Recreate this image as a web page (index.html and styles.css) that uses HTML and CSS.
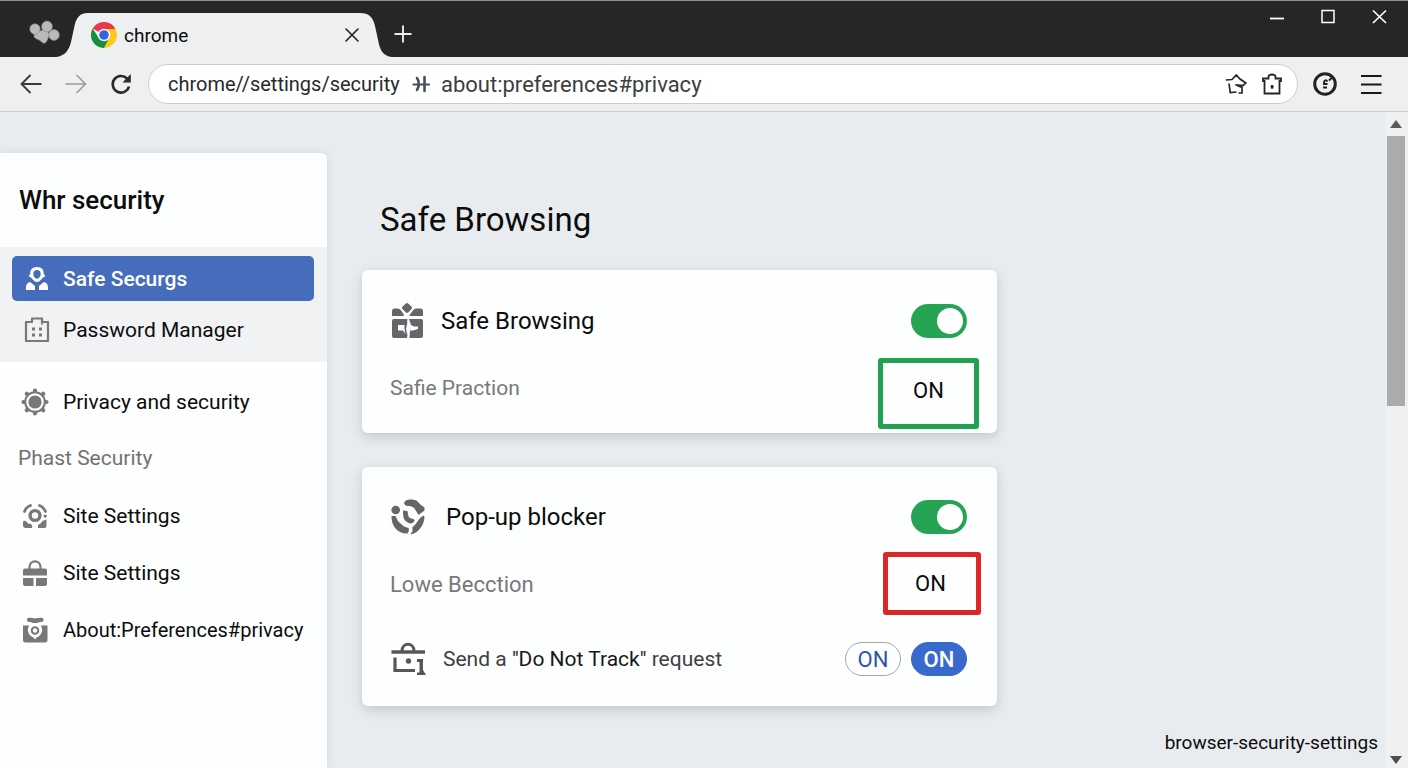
FILE: index.html
```html
<!DOCTYPE html>
<html lang="en">
<head>
<meta charset="utf-8">
<meta name="viewport" content="width=device-width, initial-scale=1">
<title>browser-security-settings</title>
<link rel="stylesheet" href="styles.css">
</head>
<body>
<header class="titlebar">
  <svg class="paw" width="32" height="26" viewBox="0 0 32 26" aria-hidden="true">
    <g fill="#b9b9b9" stroke="#8c8c8c" stroke-width=".6"><path d="M9 12c4 0 5-3 8-2s5 4 4 6-2 6-4 7-4-2-6-3-5-2-5-4 1-4 3-4z"/><circle cx="7" cy="9" r="5.2"/><circle cx="19" cy="6.500" r="5.400"/><circle cx="26" cy="15" r="5.400"/></g>
  </svg>
  <div class="tab">
    <svg class="tab-side" width="32" height="44" viewBox="0 0 32 44" aria-hidden="true"><path fill="#eeeff0" d="M0 44C9 43 13 37 15 29L18.500 13C20.500 4 24 0 32 0V44Z"/></svg>
    <div class="tab-body">
      <svg width="26" height="26" viewBox="0 0 26 26" aria-hidden="true">
        <path fill="#e8384b" d="M13 13L1.700 6.500A13 13 0 0 1 24.300 6.500Z"/>
        <path fill="#fcc91c" d="M13 13L13 7H24.500A13 13 0 0 1 13 26Z"/>
        <path fill="#178c45" d="M1.700 6.500L7.800 16 13 19 18 16 13 26A13 13 0 0 1 1.700 6.500Z"/>
        <circle cx="13" cy="13" r="6.200" fill="#fff"/><circle cx="13" cy="13" r="4.800" fill="#2f68d8"/>
      </svg>
      <span class="tab-title">chrome</span>
      <button class="icon-btn" type="button" aria-label="Close tab"><svg width="14" height="14" viewBox="0 0 14 14"><path d="M1 1L13 13M13 1L1 13" stroke="#222" stroke-width="1.600" stroke-linecap="round"/></svg></button>
    </div>
    <svg class="tab-side" width="32" height="44" viewBox="0 0 32 44" aria-hidden="true"><path fill="#eeeff0" d="M32 44C23 43 20 37 18.500 29L15 13C13 4 9 0 0 0V44Z"/></svg>
  </div>
  <button class="icon-btn new-tab" type="button" aria-label="New tab"><svg width="18" height="18" viewBox="0 0 18 18"><path d="M9 .5V17.500M.5 9H17.500" stroke="#eee" stroke-width="1.900"/></svg></button>
  <div class="window-controls">
    <button class="icon-btn" type="button" aria-label="Minimize"><svg width="16" height="16" viewBox="0 0 16 16"><path d="M1 10.500H15" stroke="#fff" stroke-width="1.800"/></svg></button>
    <button class="icon-btn" type="button" aria-label="Maximize"><svg width="16" height="16" viewBox="0 0 16 16"><rect x="2" y="2.500" width="12" height="12" fill="none" stroke="#fff" stroke-width="1.500"/></svg></button>
    <button class="icon-btn" type="button" aria-label="Close"><svg width="16" height="16" viewBox="0 0 16 16"><path d="M2 2.500L15 15M15 2.500L2 15" stroke="#fff" stroke-width="1.700"/></svg></button>
  </div>
</header>

<nav class="toolbar" aria-label="Browser toolbar">
  <button class="icon-btn" type="button" aria-label="Back"><svg width="22" height="20" viewBox="0 0 22 20"><path d="M21.500 10H1.500M10.500 1L1.500 10L10.500 19" fill="none" stroke="#3a3a3a" stroke-width="1.900"/></svg></button>
  <button class="icon-btn" type="button" aria-label="Forward"><svg width="22" height="20" viewBox="0 0 22 20"><path d="M.5 10H20.500M11.500 1L20.500 10L11.500 19" fill="none" stroke="#9b9c9d" stroke-width="1.600"/></svg></button>
  <button class="icon-btn" type="button" aria-label="Reload"><svg width="22" height="22" viewBox="0 0 22 22"><path d="M17 5.500A8.300 8.300 0 1 0 19 13.500" fill="none" stroke="#2a2a2a" stroke-width="2.600"/><path d="M20.800 1V9.500H12.500Z" fill="#2a2a2a"/></svg></button>
  <form class="omnibox">
    <input class="url-site" aria-label="Address" value="chrome//settings/security">
    <svg width="18" height="18" viewBox="0 0 18 18" aria-hidden="true"><path d="M5 3L6.500 6V11.500L5 15M12.500 2V16" fill="none" stroke="#414f5e" stroke-width="2.600" stroke-linecap="round"/><path d="M1.500 9.500H17" fill="none" stroke="#414f5e" stroke-width="2.200" stroke-linecap="round"/></svg>
    <input class="url-page" aria-label="Page address" value="about:preferences#privacy">
    <button class="icon-btn" type="button" aria-label="Share"><svg width="22" height="22" viewBox="0 0 22 22"><path d="M.8 7L7 6.500 11.300 2 15 6 20.800 10 18 12.500 10.500 11.800 17 14.500V20H13.500M4 10.500L5.300 19.500 11.500 19" fill="none" stroke="#252525" stroke-width="1.700"/></svg></button>
    <button class="icon-btn" type="button" aria-label="Security"><svg width="22" height="22" viewBox="0 0 22 22"><path d="M3.500 8H2V5.500H7.500V3.500Q8 1.500 11 1.500T14.500 3.500V5.500H20V8H18.500V20.500H3.500Z" fill="none" stroke="#252525" stroke-width="1.800"/><rect x="9.700" y="12" width="2.800" height="3.800" rx="1" fill="#252525"/></svg></button>
  </form>
  <button class="icon-btn account" type="button" aria-label="Account"><svg width="24" height="24" viewBox="0 0 24 24"><circle cx="12" cy="12" r="10.300" fill="none" stroke="#222" stroke-width="3"/><path d="M10 15.500H14M10 12H14.500M11 11C11 8 13 7.500 14.500 9.500M16 8.500L19.500 5" fill="none" stroke="#222" stroke-width="2"/></svg></button>
  <button class="icon-btn" type="button" aria-label="Menu"><svg width="22" height="20" viewBox="0 0 22 20"><path d="M1 2H21.500M1 10.500H21.500M1 19H21.500" stroke="#181818" stroke-width="2"/></svg></button>
</nav>

<div class="page">
  <aside class="sidebar">
    <h2 class="sidebar-title">Whr security</h2>
    <nav aria-label="Settings sections">
      <div class="nav-band">
        <a class="nav-item active" href="#safe" aria-current="page">
          <svg width="26" height="26" viewBox="0 0 26 26"><g fill="#fff"><path fill-rule="evenodd" d="M13 1C18 1 20 4 19.700 8L21.500 10 18.500 12C17 14 15 16 13 16S9 14 7.500 12L4.500 10 6.300 8C6 4 8 1 13 1ZM13 4C10.500 4 9 6 9.300 8.500C9.500 11 11.500 12.700 13 12.700S16.500 11 16.700 8.500C17 6 15.500 4 13 4Z"/><path d="M2 24C1.500 18 4 16 6.500 16.300L11 20V24ZM24 24C24.500 18 22 16 19.500 16.300L15 20V24Z"/></g></svg>
          Safe Securgs</a>
        <a class="nav-item" href="#passwords">
          <svg width="26" height="26" viewBox="0 0 26 26"><path d="M2 24V5H8V1.500H18V5H24V24Z" fill="none" stroke="#77787a" stroke-width="2.200" stroke-linejoin="round"/><path d="M18 8V5" fill="none" stroke="#77787a" stroke-width="1.500"/><path d="M8 10.500h3v3H8zM15 10.500h3v3h-3zM8 16.500h3v3H8zM15 16.500h3v3h-3z" fill="#77787a"/></svg>
          Password Manager</a>
      </div>
      <div class="nav-list">
        <a class="nav-item" href="#privacy">
          <svg width="28" height="28" viewBox="0 0 28 28"><circle cx="14" cy="14" r="6.600" fill="#77787a"/><circle cx="14" cy="14" r="9.800" fill="none" stroke="#77787a" stroke-width="2"/><path d="M14 3V2.500M14 25.500V25M3 14H2.500M25.500 14H25M6.200 6.200L5.800 5.800M22.200 22.200L21.800 21.800M6.200 21.800L5.800 22.200M22.200 5.800L21.800 6.200" fill="none" stroke="#77787a" stroke-width="4.200" stroke-linecap="round"/></svg>
          Privacy and security</a>
        <h3 class="nav-heading">Phast Security</h3>
        <a class="nav-item" href="#site">
          <svg width="26" height="26" viewBox="0 0 26 26"><g fill="none" stroke="#77787a"><circle cx="13" cy="12.500" r="4.900" stroke-width="3.400"/><path stroke-width="2.700" stroke-linecap="round" d="M2.500 8.500C3.500 5.500 5.500 3.500 8.500 2.500M17.500 2.500C20.500 3.500 22 5.500 23.500 8.500"/></g><path fill="#77787a" d="M1 18.500Q3 17 4.500 18.500 5 20.500 9 21Q11 23 10 25H3.500Q1.500 25 1 23ZM24.500 16.500 20.500 18 18.500 20.500 16 22V25H22.500Q24.500 25 24.500 22ZM22 11.500l3 .5-1 3-2.500-1z"/></svg>
          Site Settings</a>
        <a class="nav-item" href="#site-locks">
          <svg width="26" height="28" viewBox="0 0 26 28"><path d="M7.500 11V8C7.500 .5 18.500 .5 18.500 8V11" fill="none" stroke="#77787a" stroke-width="2.200"/><path fill="#77787a" d="M3 9.500H23Q25 9.500 25 11.500V16.500H1V11.500Q1 9.500 3 9.500ZM1 19H11.500V27H3Q1 27 1 25ZM14 19H25V25Q25 27 23 27H14Z"/></svg>
          Site Settings</a>
        <a class="nav-item nav-item-long" href="#about">
          <svg width="26" height="26" viewBox="0 0 26 26"><path fill="#77787a" fill-rule="evenodd" d="M1 8.500H7L5.800 13C6 18 9.500 20 13 23C16.500 20 20 18 20.200 13L19 8.500H25.500V23Q25.500 25.500 23 25.500H3.500Q1 25.500 1 23Z"/><path fill="#77787a" d="M6 14 13 22.500 20 14V25H6Z"/><circle cx="13" cy="13.500" r="5.600" fill="#77787a" stroke="#fdfefe" stroke-width="2.600"/><circle cx="13" cy="13.500" r="2.200" fill="#fdfefe"/><path fill="#77787a" d="M6.500 .8Q10 .5 13 1.500 16 .5 20 .8 22 1.500 21.500 3.500 20.500 5.500 18 5L15 6H11L8.500 5Q5.500 5.500 5 3.500 4.500 1.500 6.500 .8Z"/></svg>
          About:Preferences#privacy</a>
      </div>
    </nav>
  </aside>

  <main class="content">
    <h1 class="page-title">Safe Browsing</h1>
    <section class="card">
      <div class="row">
        <svg width="34" height="36" viewBox="0 0 34 36" aria-hidden="true"><g fill="#65666a"><path d="M17 0Q18.200 0 21.600 3.800Q22.500 5 21.600 6L18 9.500Q17 10.300 16 9.500L12.400 6Q11.500 5 12.400 3.800Q15.800 0 17 0ZM2 13V8Q2 5.500 4 5.500H8Q10 5.500 11.500 8L14 12 13.500 13ZM33 13V8Q33 5.500 31 5.500H26Q24 5.500 22.500 8L19.500 12 20 13Z"/><path fill-rule="evenodd" d="M4 16H17.500L17 19.500H17.500L16 26 17.500 32 17 35H4Q2 35 2 33V18Q2 16 4 16ZM8 22V27.500H13L15.500 31 14.500 26.500V22ZM19 16H31Q33 16 33 18V33Q33 35 31 35H19.500L20 27.500H23L28 26V23.500L24 23.500 21 22Z"/></g></svg>
        <label class="setting-name" for="safe">Safe Browsing</label>
        <input class="toggle" type="checkbox" id="safe" checked>
      </div>
      <div class="row detail">
        <p class="note">Safie Praction</p>
        <output class="state state-good" for="safe">ON</output>
      </div>
    </section>
    <section class="card card-large">
      <div class="row row-wide">
        <svg width="36" height="36" viewBox="0 0 36 36" aria-hidden="true"><g fill="#65666a"><circle cx="5.700" cy="11" r="4.300"/><path d="M16 1.500C19 0 24 0 27 2L31 6 34.500 8.500V11.500L28.500 16 26 12C24 7.500 21 7 17 7Q14 6 14 4 14.500 2 16 1.500ZM1.500 17H5C7 17.500 6 21 10 24L14 27.500 18.500 29 19 31.500 17.500 34.500C8 35 1 27 1.500 17ZM22.500 28C27 25 28 20 32 17.500Q34 16 34.500 18C34 27 28 34 20.500 35.500L22.500 32ZM13 11.500 17.500 12 18.500 17.500C21 21 25 18.500 24.500 22C23 25 19 25 17 23C13 21 13 16 13 11.500Z"/></g></svg>
        <label class="setting-name" for="popup">Pop-up blocker</label>
        <input class="toggle" type="checkbox" id="popup" checked>
      </div>
      <div class="row detail">
        <p class="note">Lowe Becction</p>
        <output class="state state-bad" for="popup">ON</output>
      </div>
      <div class="row track">
        <svg width="36" height="34" viewBox="0 0 36 34" aria-hidden="true"><g fill="none" stroke="#56575a"><path stroke-width="3.600" d="M1.500 10H35"/><path stroke-width="3" d="M12 9C12 0 24 0 24 9"/><path stroke-width="3.200" d="M5 15.500V28.500H25"/></g><circle cx="18.500" cy="19" r="2.700" fill="#56575a"/><path fill="#56575a" d="M27 17H33V28L36 33H27V30.500H29.500V20H27Z"/></svg>
        <p class="track-label">Send a <span class="strong">"Do Not Track"</span> request</p>
        <div class="pills">
          <button class="pill" type="button">ON</button>
          <button class="pill pill-filled" type="button">ON</button>
        </div>
      </div>
    </section>
  </main>
  <p class="caption">browser-security-settings</p>
  <div class="scrollbar" aria-hidden="true">
    <svg width="12" height="8" viewBox="0 0 12 8"><path d="M6 0L12 8H0Z" fill="#5a5b5d"/></svg>
    <div class="thumb"></div>
    <svg width="12" height="8" viewBox="0 0 12 8"><path d="M6 8L12 0H0Z" fill="#4b4c4e"/></svg>
  </div>
</div>
</body>
</html>
```
FILE: styles.css
```css
* {
  box-sizing: border-box;
}

body {
  margin: 0;
  height: 100vh;
  display: flex;
  flex-direction: column;
  overflow: hidden;
  background: #e9ecef;
  color: #0c0c0d;
  font-family: Roboto, "Liberation Sans", sans-serif;
  font-size: 22px;
}

h1, h2, h3, p {
  margin: 0;
  font-weight: 400;
}

svg {
  display: block;
  flex: none;
}

.icon-btn {
  display: flex;
  flex: none;
  padding: 0;
  border: 0;
  background: none;
}

/* Title bar */
.titlebar {
  display: flex;
  flex: none;
  align-items: flex-end;
  height: 57px;
  padding: 0 21px 0 28px;
  border-top: 1px solid #8e9193;
  background: #242628;
}

.paw {
  margin: 0 -4px 11px 0;
}

.tab {
  display: flex;
  flex: 0 1 336px;
}

.tab-body {
  display: flex;
  flex: 1;
  align-items: center;
  gap: 7px;
  margin: 0 -1px;
  padding: 0 2px 0 4px;
  background: #eeeff0;
}

.tab-title {
  flex: 1;
  font-size: 19px;
}

.new-tab {
  margin: 0 0 14px 2px;
}

.window-controls {
  display: flex;
  align-self: flex-start;
  gap: 35px;
  margin: 7px 0 0 auto;
}

/* Toolbar */
.toolbar {
  display: flex;
  flex: none;
  align-items: center;
  height: 55px;
  padding: 0 26px 0 20px;
  gap: 23px;
  border-bottom: 1px solid #cbcdcf;
  background: #eeeff0;
}

.omnibox {
  display: flex;
  flex: 1;
  align-items: center;
  height: 40px;
  margin-left: -7px;
  padding: 0 14px 0 19px;
  border: 1px solid #cccecf;
  border-radius: 20px;
  background: #fff;
  gap: 14px;
}

.omnibox input {
  min-width: 0;
  padding: 0;
  border: 0;
  background: none;
  font-family: inherit;
}

.omnibox .url-site {
  flex: 0 1 236px;
  margin-right: -6px;
  color: #28292b;
  font-size: 20px;
}

.omnibox .url-page {
  flex: 1;
  margin-left: -3px;
  color: #3c3e40;
  font-size: 22px;
}

.account {
  margin-left: -8px;
}

/* Page */
.page {
  display: flex;
  flex: 1;
  min-height: 0;
}

.sidebar {
  flex: 0 0 327px;
  margin-top: 41px;
  border-radius: 0 6px 0 0;
  background: #fdfefe;
  box-shadow: 0 0 10px rgba(40, 60, 80, 0.12);
}

.sidebar-title {
  padding: 27px 19px;
  font-size: 26px;
  font-weight: 500;
  line-height: 40px;
}

.nav-band {
  padding: 9px 13px 4px 12px;
  background: #f0f2f4;
}

.nav-list {
  padding: 11px 0 0 12px;
}

.nav-item {
  display: grid;
  grid-template-columns: 28px 1fr;
  align-items: center;
  gap: 12px;
  height: 57px;
  padding-left: 11px;
  color: inherit;
  font-size: 21px;
  text-decoration: none;
  white-space: nowrap;
}

.nav-item svg {
  justify-self: center;
}

.nav-list .nav-item {
  gap: 14px;
  padding-left: 9px;
}

.nav-list .nav-item-long {
  font-size: 20px;
}

.nav-item.active {
  height: 45px;
  border-radius: 5px;
  background: #466cbc;
  color: #fff;
  font-weight: 500;
}

.nav-heading {
  padding-left: 6px;
  color: #717274;
  font-size: 21px;
  line-height: 57px;
}

.content {
  flex: 0 1 635px;
  margin: 86px 0 0 35px;
}

.page-title {
  padding-left: 18px;
  font-size: 33px;
  line-height: 44px;
}

.card {
  margin-top: 28px;
  padding: 34px 18px 4px 28px;
  border-radius: 6px;
  background: #fdfefe;
  box-shadow: 0 4px 12px rgba(40, 55, 70, 0.2);
}

.card-large {
  margin-top: 34px;
  padding: 33px 16px 30px 28px;
}

.row {
  display: flex;
  align-items: center;
  gap: 17px;
  height: 34px;
}

.row-wide {
  gap: 20px;
}

.setting-name {
  font-size: 24px;
}

.toggle {
  appearance: none;
  display: flex;
  justify-content: flex-end;
  width: 56px;
  height: 34px;
  margin: 0 12px 0 auto;
  padding: 4px;
  border-radius: 17px;
  background: #25a554;
}

.card-large .toggle {
  margin-right: 14px;
}

.toggle::before {
  content: "";
  width: 26px;
  height: 26px;
  border-radius: 50%;
  background: #fff;
}

.toggle:not(:checked) {
  justify-content: flex-start;
  background: #9aa0a6;
}

.detail {
  align-items: flex-start;
  justify-content: space-between;
  height: auto;
  margin-top: 20px;
}

.card-large .detail {
  margin-top: 18px;
}

.note {
  color: #78797b;
  font-size: 21px;
  line-height: 61px;
}

.card-large .note {
  font-size: 22px;
  line-height: 65px;
}

.state {
  display: flex;
  justify-content: center;
  width: 101px;
  border: 5px solid #22a152;
  border-radius: 3px;
}

.state-good {
  padding-bottom: 5px;
  line-height: 56px;
}

.state-bad {
  width: 98px;
  padding-right: 3px;
  border-color: #da2828;
  line-height: 53px;
}

.track {
  gap: 17px;
  margin-top: 25px;
}

.track-label {
  color: #3e4042;
  font-size: 21px;
}

.strong {
  color: #17181a;
}

.pills {
  display: flex;
  gap: 10px;
  margin: 0 14px 0 auto;
}

.pill {
  width: 56px;
  height: 34px;
  padding: 0;
  border: 1px solid #a3a5a8;
  border-radius: 17px;
  background: #fff;
  color: #2c57a8;
  font: inherit;
}

.pill-filled {
  border-color: #386ace;
  background: #386ace;
  color: #fff;
  font-weight: 500;
}

.caption {
  align-self: flex-end;
  margin: 0 7px 10px auto;
  font-size: 19px;
  line-height: 30px;
}

.scrollbar {
  display: flex;
  flex: 0 0 23px;
  flex-direction: column;
  align-items: center;
  padding: 8px 2px 4px 0;
  background: #eff0f0;
}

.thumb {
  width: 18px;
  height: 42%;
  margin: 8px 0 auto;
  background: #a9abac;
}
```
